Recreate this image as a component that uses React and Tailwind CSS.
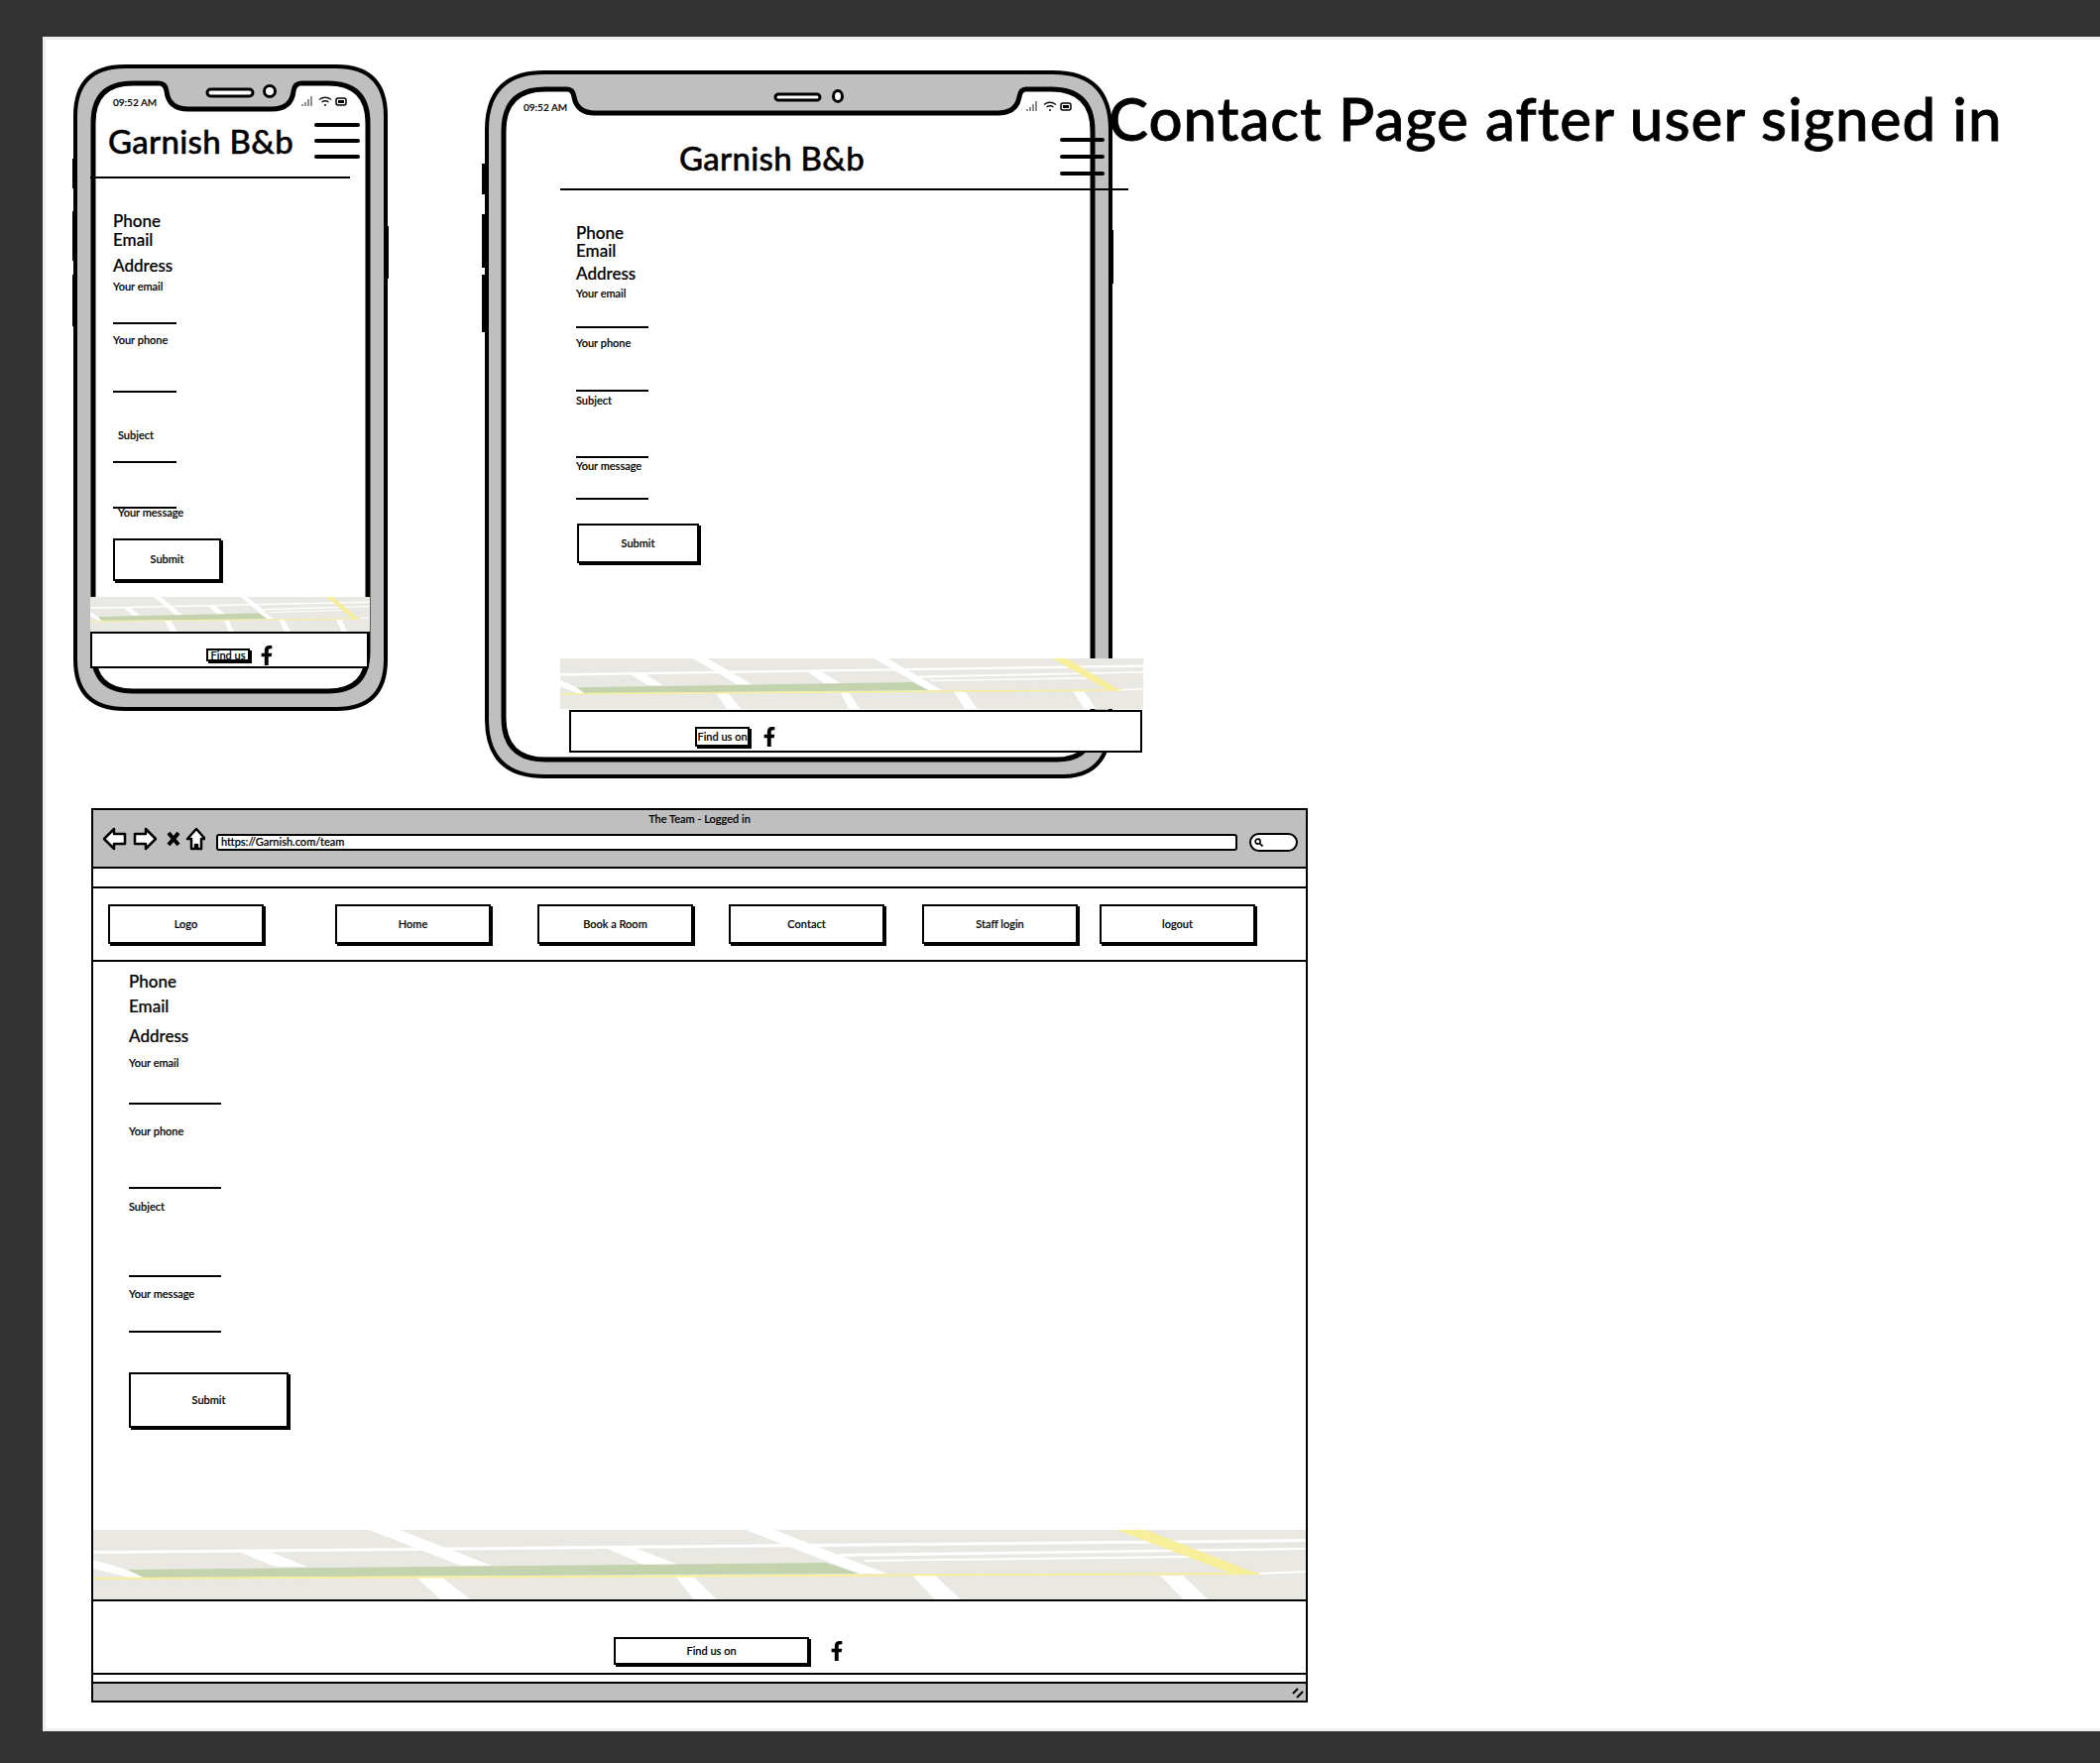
import React from "react";
import { FaFacebookF } from "react-icons/fa";

const Map = ({ className }) => (
  <svg viewBox="0 0 1226 70" preserveAspectRatio="none" className={className}>
    <rect width="1226" height="70" fill="#e9e8e3" />
    <g fill="#fff">
      <polygon points="279,0 310,0 403,36 372,36" />
      <polygon points="147,22 179,22 216,37 184,37" />
      <polygon points="518,18 548,18 594,36 559,36" />
      <polygon points="660,0 689,0 802,44 774,44" />
      <polygon points="0,30 0,39 41,49 58,49 34,40" />
      <polygon points="327,48 353,48 381,70 351,70" />
      <polygon points="589,47 607,47 630,70 607,70" />
      <polygon points="828,46 851,46 877,70 851,70" />
      <polygon points="1079,46 1102,46 1127,70 1102,70" />
      <polygon points="0,21 1226,9 1226,12 0,24" />
      <polygon points="755,24 1226,18 1226,20 755,27" />
      <polygon points="780,30 1110,26 1110,28 780,32" />
      <polygon points="1179,43 1226,41 1226,43 1179,45" />
    </g>
    <polygon points="34,40 741,33 774,44 51,48" fill="#c2d3ae" />
    <polygon points="0,48 1179,43 1179,45 0,50" fill="#f7ef9a" />
    <polygon points="1035,0 1065,0 1179,45 1154,45" fill="#f7ef9a" />
  </svg>
);

const Status = ({ x, y }) => (
  <g transform={`translate(${x} ${y})`}>
    <g stroke="#444" strokeWidth="1.2">
      <path d="M1 10V8M4 10V6M7 10V3M10 10V0" />
    </g>
    <g fill="none" stroke="#111" strokeWidth="1.3">
      <path d="M18 3.5Q24 -1 30 3.5" />
      <path d="M20.5 6Q24 3.5 27.500 6" />
    </g>
    <circle cx="24" cy="9" r="1" fill="#111" />
    <rect x="35" y="2" width="10" height="7" rx="2" fill="#fff" stroke="#000" strokeWidth="1.5" />
    <rect x="37" y="4" width="6" height="3" fill="#000" />
  </g>
);

const Burger = ({ w, gap, h, className }) => (
  <div className={className}>
    <div className={`${w} ${h} rounded-full bg-black`} />
    <div className={`${w} ${h} rounded-full bg-black ${gap}`} />
    <div className={`${w} ${h} rounded-full bg-black ${gap}`} />
  </div>
);

const Button = ({ className, text, children }) => (
  <div className={`flex items-center justify-center border-2 border-black bg-white shadow-[2px_2px_0_#000] font-medium ${className}`}>
    <span className={text}>{children}</span>
  </div>
);

const Label = ({ className = "", children }) => (
  <p className={`h-[14px] text-[11px] leading-[14px] font-medium ${className}`}>{children}</p>
);

const Rule = ({ className }) => <div className={`h-[2px] bg-black ${className}`} />;

function Phone() {
  return (
    <div className="absolute left-[24px] top-[20px] h-[665px] w-[330px]">
      <svg viewBox="70 60 330 665" className="absolute inset-0 h-full w-full">
        <g fill="#000">
          <rect x="73" y="160" width="4" height="30" />
          <rect x="73" y="213" width="4" height="50" />
          <rect x="73" y="277" width="4" height="52" />
          <rect x="388" y="228" width="4" height="53" />
        </g>
        <path d="M126 67H339Q389 67 389 117V665Q389 715 339 715H126Q76 715 76 665V117Q76 67 126 67Z" fill="#bfbfbf" stroke="#000" strokeWidth="4" />
        <path d="M134 84H160Q167 84 168 92Q170 110 190 110H274Q294 110 296 92Q297 84 304 84H331Q371 84 371 124V657Q371 697 331 697H134Q94 697 94 657V124Q94 84 134 84Z" fill="#fff" stroke="#000" strokeWidth="5" />
        <rect x="209" y="90" width="46" height="7" rx="3.500" fill="#fff" stroke="#000" strokeWidth="3" />
        <ellipse cx="272" cy="92" rx="5.500" ry="5.500" fill="#fff" stroke="#000" strokeWidth="3" />
        <Status x="304" y="97" />
      </svg>
      <div className="absolute left-[21px] top-[23px] flex w-[282px] flex-col">
        <div className="flex h-[40px] items-center pl-[23px] text-[10px] font-medium">09:52 AM</div>
        <div className="flex h-[38px] items-center pl-[18px]">
          <span className="text-[33px] font-medium leading-[38px] tracking-[0.3px] [-webkit-text-stroke:0.5px_#000]">Garnish B&amp;b</span>
          <Burger className="ml-auto mr-[10px]" w="w-[46px]" h="h-[4px]" gap="mt-[12px]" />
        </div>
        <Rule className="mt-[17px] w-[262px]" />
        <div className="ml-[23px]">
          <p className="mt-[33px] h-[19px] text-[17px] font-medium leading-[19px]">Phone</p>
          <p className="h-[19px] text-[17px] font-medium leading-[19px]">Email</p>
          <p className="mt-[7px] h-[20px] text-[17px] font-medium leading-[20px]">Address</p>
          <Label className="mt-[4px]">Your email</Label>
          <Rule className="mt-[29px] w-[64px]" />
          <Label className="mt-[9px]">Your phone</Label>
          <Rule className="mt-[44px] w-[64px]" />
          <Label className="ml-[5px] mt-[36px]">Subject</Label>
          <Rule className="mt-[19px] w-[64px]" />
          <Rule className="mt-[44px] w-[64px]" />
          <Label className="ml-[5px] -mt-[3px]">Your message</Label>
          <Button className="mt-[19px] h-[43px] w-[109px]" text="text-[11px]">Submit</Button>
        </div>
        <Map className="mt-[16px] h-[35px] w-[282px]" />
        <div className="flex h-[37px] w-[281px] items-center justify-center border-2 border-black bg-white pl-[24px]">
          <Button className="mt-[9px] h-[13px] w-[44px] overflow-hidden" text="text-[11px] leading-[11px]">Find us</Button>
          <FaFacebookF className="ml-[7px] mt-[11px] text-[20px]" />
        </div>
      </div>
    </div>
  );
}

function Tablet() {
  return (
    <div className="absolute left-[439px] top-[28px] h-[720px] w-[720px]">
      <svg viewBox="485 68 720 720" className="absolute inset-0 h-full w-full">
        <g fill="#000">
          <rect x="486" y="165" width="5" height="31" />
          <rect x="486" y="216" width="5" height="54" />
          <rect x="486" y="277" width="5" height="58" />
          <rect x="1118" y="232" width="5" height="54" />
        </g>
        <path d="M549 73H1062Q1120 73 1120 131V735Q1116 783 1072 783H549Q491 783 491 725V131Q491 73 549 73Z" fill="#bfbfbf" stroke="#000" strokeWidth="4" />
        <path d="M550 90H572Q578 90 579 98Q582 114 600 114H1007Q1025 114 1028 98Q1029 90 1035 90H1060Q1102 90 1102 132V730Q1102 766 1066 766H550Q508 766 508 724V132Q508 90 550 90Z" fill="#fff" stroke="#000" strokeWidth="5" />
        <rect x="782" y="95" width="45" height="6" rx="3" fill="#fff" stroke="#000" strokeWidth="3" />
        <ellipse cx="845" cy="97" rx="4.500" ry="5.500" fill="#fff" stroke="#000" strokeWidth="3" />
        <Status x="1035" y="102" />
      </svg>
      <div className="absolute left-[23px] top-[20px] flex w-[650px] flex-col">
        <div className="flex h-[40px] items-center pl-[20px] text-[10px] font-medium">09:52 AM</div>
        <div className="flex h-[62px] items-center pl-[177px]">
          <span className="text-[33px] font-medium leading-[38px] tracking-[0.3px] [-webkit-text-stroke:0.5px_#000]">Garnish B&amp;b</span>
          <Burger className="ml-auto mb-[3px] mr-[44px]" w="w-[45px]" h="h-[4px]" gap="mt-[13px]" />
        </div>
        <Rule className="ml-[57px] w-[573px]" />
        <div className="ml-[73px]">
          <p className="mt-[34px] h-[18px] text-[17px] font-medium leading-[18px]">Phone</p>
          <p className="h-[18px] text-[17px] font-medium leading-[18px]">Email</p>
          <p className="mt-[4px] h-[20px] text-[17px] font-medium leading-[20px]">Address</p>
          <Label className="mt-[3px]">Your email</Label>
          <Rule className="mt-[26px] w-[73px]" />
          <Label className="mt-[8px]">Your phone</Label>
          <Rule className="mt-[40px] w-[73px]" />
          <Label className="mt-[2px]">Subject</Label>
          <Rule className="mt-[49px] w-[73px]" />
          <Label className="mt-px">Your message</Label>
          <Rule className="mt-[25px] w-[73px]" />
          <Button className="ml-px mt-[24px] h-[40px] w-[123px]" text="text-[11px]">Submit</Button>
        </div>
        <Map className="ml-[57px] mt-[96px] h-[51px] w-[588px]" />
        <div className="ml-[66px] mt-px flex h-[43px] w-[578px] items-center border-2 border-black bg-white pl-[125px]">
          <Button className="mt-[10px] h-[20px] w-[55px]" text="text-[11px] leading-[14px] whitespace-nowrap">Find us on</Button>
          <FaFacebookF className="ml-[10px] mt-[10px] text-[20px]" />
        </div>
      </div>
    </div>
  );
}

function Browser() {
  const nav = [
    ["Logo", "ml-[15px]"],
    ["Home", "ml-[72px]"],
    ["Book a Room", "ml-[47px]"],
    ["Contact", "ml-[36px]"],
    ["Staff login", "ml-[38px]"],
    ["logout", "ml-[22px]"],
  ];
  return (
    <div className="absolute left-[46px] top-[775px] flex h-[902px] w-[1227px] flex-col border-2 border-black bg-white">
      <div className="h-[59px] shrink-0 border-b-2 border-black bg-[#bfbfbf]">
        <p className="h-[17px] text-center text-[11px] font-medium leading-[17px]">The Team - Logged in</p>
        <div className="flex h-[30px] items-center pl-[9px]">
          <svg viewBox="0 0 104 24" className="-mt-[7px] h-[24px] w-[104px] shrink-0">
            <g fill="#fff" stroke="#000" strokeWidth="2.500" strokeLinejoin="round">
              <path d="M2 12L12 2V7H23V17H12V22Z" />
              <path d="M54 12L44 2V7H33V17H44V22Z" />
              <path d="M86 12L95 2L104 12H100V22H96V18H94V22H90V12Z" />
            </g>
            <path d="M67 6L77 18M77 6L67 18" stroke="#000" strokeWidth="4" fill="none" />
          </svg>
          <div className="ml-[11px] flex h-[17px] w-[1030px] shrink-0 items-center rounded-[3px] border-2 border-black bg-white pl-[3px] text-[11px] font-medium leading-[12px]">
            https://Garnish.com/team
          </div>
          <div className="ml-[12px] flex h-[19px] w-[49px] shrink-0 items-center rounded-full border-2 border-black bg-white pl-[3px]">
            <svg viewBox="0 0 10 10" className="h-[9px] w-[9px]">
              <circle cx="4" cy="4" r="2.800" fill="none" stroke="#000" strokeWidth="1.800" />
              <path d="M6 6L9.500 9.500" stroke="#000" strokeWidth="2" />
            </svg>
          </div>
        </div>
      </div>
      <div className="h-[20px] shrink-0 border-b-2 border-black" />
      <div className="flex h-[74px] shrink-0 items-center border-b-2 border-black">
        {nav.map(([t, m]) => (
          <Button key={t} className={`h-[40px] w-[157px] shrink-0 ${m}`} text="text-[11px]">{t}</Button>
        ))}
      </div>
      <div className="flex-1 pl-[36px]">
        <p className="mt-[10px] h-[20px] text-[17px] font-medium leading-[20px]">Phone</p>
        <p className="mt-[5px] h-[20px] text-[17px] font-medium leading-[20px]">Email</p>
        <p className="mt-[10px] h-[20px] text-[17px] font-medium leading-[20px]">Address</p>
        <Label className="mt-[10px]">Your email</Label>
        <Rule className="mt-[33px] w-[93px]" />
        <Label className="mt-[20px]">Your phone</Label>
        <Rule className="mt-[49px] w-[93px]" />
        <Label className="mt-[11px]">Subject</Label>
        <Rule className="mt-[62px] w-[93px]" />
        <Label className="mt-[10px]">Your message</Label>
        <Rule className="mt-[30px] w-[93px]" />
        <Button className="mt-[40px] h-[56px] w-[161px]" text="text-[11px]">Submit</Button>
      </div>
      <Map className="h-[70px] w-full shrink-0" />
      <div className="flex h-[76px] shrink-0 items-center border-y-2 border-black pl-[525px]">
        <Button className="mt-[28px] h-[28px] w-[197px]" text="text-[11px]">Find us on</Button>
        <FaFacebookF className="ml-[18px] mt-[28px] text-[20px]" />
      </div>
      <div className="h-[7px] shrink-0" />
      <div className="flex h-[19px] shrink-0 items-end justify-end border-t-2 border-black bg-[#bfbfbf] pr-[2px]">
        <svg viewBox="0 0 12 12" className="mb-[2px] h-[12px] w-[12px]">
          <path d="M1 7L6 2M5 11L11 5" stroke="#000" strokeWidth="2" />
        </svg>
      </div>
    </div>
  );
}

export default function App() {
  return (
    <div className="h-[1778px] w-[2118px] overflow-hidden bg-[#333333] pl-[43px] pt-[37px] text-black [-webkit-text-stroke:0.2px_#000] [font-family:Lato,'Liberation_Sans',sans-serif]">
      <div className="relative h-[1709px] w-[2075px] border-b-[3px] border-l-[3px] border-t-[3px] border-[#efefef] bg-white">
        <Phone />
        <Tablet />
        <Browser />
        <h1 className="absolute left-[1072px] top-[44px] whitespace-nowrap text-[60px] font-medium leading-[70px] tracking-[1px] [-webkit-text-stroke:0.8px_#000]">
          Contact Page after user signed in
        </h1>
      </div>
    </div>
  );
}
